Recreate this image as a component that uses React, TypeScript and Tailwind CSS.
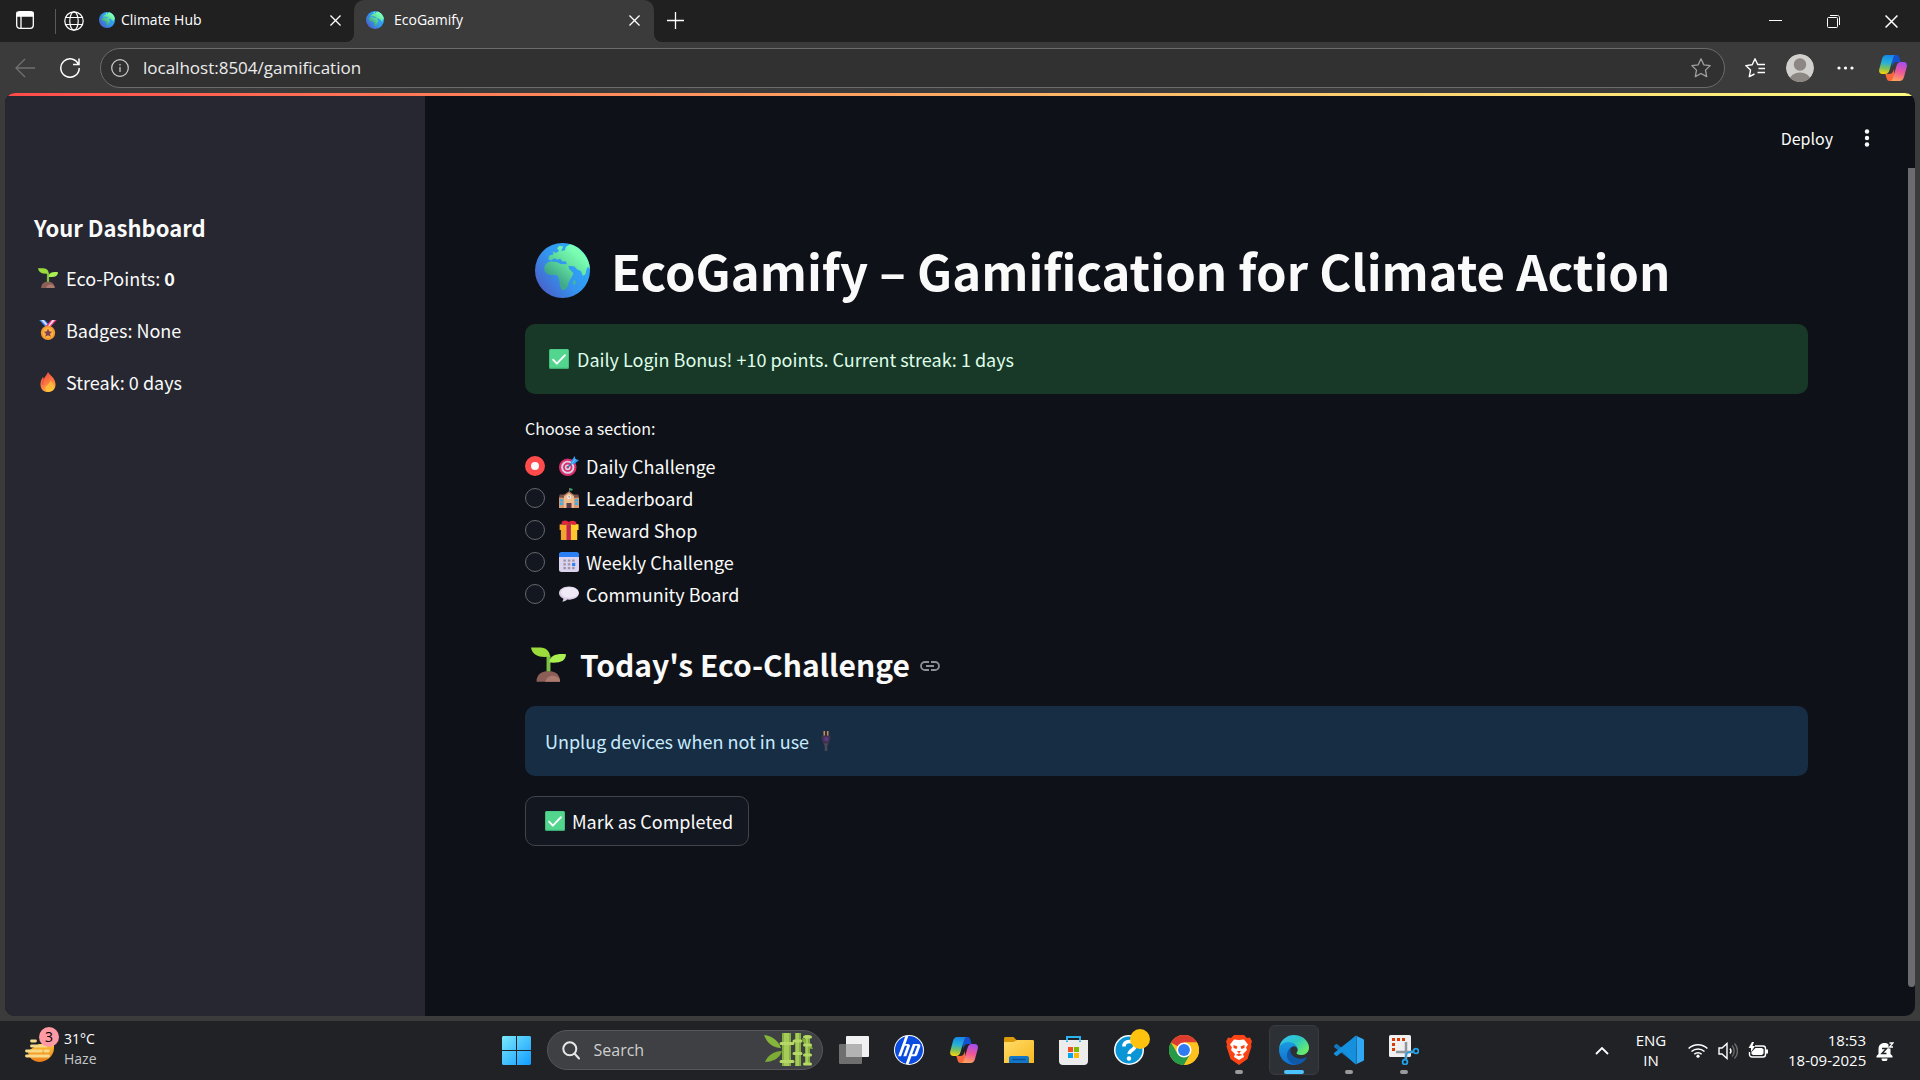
import { useState, type ReactNode } from 'react';
import { SiHp } from 'react-icons/si';

type IconProps = { className?: string };

function GlobeEmoji({ className }: IconProps) {
  return (
    <svg viewBox="0 0 32 32" className={className} aria-hidden="true">
      <defs>
        <linearGradient id="sea" x1="1" y1="0.2" x2="0.1" y2="0.9">
          <stop offset="0" stopColor="#2bb0fb" />
          <stop offset="0.55" stopColor="#3493ee" />
          <stop offset="1" stopColor="#4a5fc8" />
        </linearGradient>
        <linearGradient id="land" x1="0.9" y1="0.1" x2="0.3" y2="0.8">
          <stop offset="0.2" stopColor="#7bffb4" />
          <stop offset="0.6" stopColor="#5fdc9c" />
          <stop offset="1" stopColor="#3fa88a" />
        </linearGradient>
      </defs>
      <circle cx="16" cy="16" r="16" fill="url(#sea)" />
      <path
        d="M20.5 0.7C27 2.6 31.6 8.6 32 15.2L30.8 13.6L29.9 15.5L29.4 18.2L27.8 19.2L26.8 16.4L24.4 15.2L23 13.6L19.4 13.3L19.8 15L22.2 17.4L22 18.4C21 21 19.6 21.5 19.2 24.6C18.6 26.6 17.3 27.6 15.8 27.4C14.2 25.4 14.6 22.4 13.6 20.2C13.4 18.4 12.2 18.6 9.6 18.6C6.6 18.4 5 16.2 5.4 14.6C5.6 12.2 7.6 10.8 9.8 10.8L13 11.2L14.8 12.2L18.4 12.4L18.2 10.8L15.8 10.6L14.6 9L13.4 9.8L11.2 8.8L9.4 10.2L7.8 9.6L8.2 7.4L10.8 6.6L10.4 5L12.2 5.8L14 4.6L12.8 3L14.2 1.6L16.4 2L15.2 4.6L17.4 4.2L18 2.2Z"
        fill="url(#land)"
      />
      <path d="M22.6 21.4l1.2 1.2-.6 1.8-1.2-.8z" fill="#46b894" />
    </svg>
  );
}

function SeedlingEmoji({ className }: IconProps) {
  return (
    <svg viewBox="0 0 32 32" className={className} aria-hidden="true">
      <path d="M5 31.8C5 25 10 22 16 22s10.600 3 10.600 9.800z" fill="#8b5e57" />
      <path d="M13 31.800C14 27 20 24 25.500 28.500c.8 1.200 1.100 2.200 1.100 3.300z" fill="#ad7a70" />
      <path d="M14.200 22.200V8h3.600v14.200z" fill="#7ac043" />
      <path d="M0 .4h8.600C14 .6 17 4 17.400 8.600 9 10 1.500 8.500 0 .4z" fill="#9bdc3c" />
      <path d="M32 6.600c-.4 6-5 8.400-15.200 7.600C17.400 8 22 6 32 6.600z" fill="#aaf053" />
    </svg>
  );
}

function MedalEmoji({ className }: IconProps) {
  return (
    <svg viewBox="0 0 32 32" className={className} aria-hidden="true">
      <path d="M2 0h9l9 10-6 3z" fill="#3f8ef5" />
      <path d="M5 0h4l9 11-2 1z" fill="#e6e2ee" />
      <path d="M30 0h-9l-9 10 6 3z" fill="#f2377d" />
      <path d="M27 0h-4l-8 11 2 1z" fill="#f1dff0" />
      <circle cx="16" cy="20.500" r="11.500" fill="#f39a32" />
      <circle cx="16" cy="20.500" r="8.500" fill="#ffb13e" />
      <path d="M16 14l2 4.400 4.700.5-3.500 3.200 1 4.700-4.200-2.400-4.200 2.400 1-4.700-3.500-3.200 4.700-.5z" fill="#7b4156" />
    </svg>
  );
}

function FireEmoji({ className }: IconProps) {
  return (
    <svg viewBox="0 0 32 32" className={className} aria-hidden="true">
      <defs>
        <linearGradient id="flame" x1="0.3" y1="0" x2="0.7" y2="1">
          <stop offset="0" stopColor="#f04a3c" />
          <stop offset="0.6" stopColor="#ff8243" />
          <stop offset="1" stopColor="#ffc53a" />
        </linearGradient>
      </defs>
      <path d="M16 0c3 5 12 10 12 20 0 8-5.500 12-12 12S4 28 4 20c0-5 1.500-9 4-12l1.500 3C11 7 14 5 16 0z" fill="url(#flame)" />
      <path d="M20 13c4 5 6 8 5 12-1 4-4 6-7.500 6-3 0-6-1.500-6-5 0-5 7-7 8.500-13z" fill="#ffc53a" opacity="0.75" />
      <path d="M10 9c-2 4-3 8-2 12" stroke="#d93f3f" strokeWidth="1" fill="none" />
    </svg>
  );
}

function CheckEmoji({ className }: IconProps) {
  return (
    <svg viewBox="0 0 32 32" className={className} aria-hidden="true">
      <rect width="32" height="32" rx="2.500" fill="#3fae74" />
      <rect x="1" y="0.500" width="30" height="29.500" rx="2" fill="#52d68d" />
      <path d="M6.500 17l6 6.500L25.500 10" fill="none" stroke="#fff" strokeWidth="3" strokeLinecap="round" strokeLinejoin="round" />
    </svg>
  );
}

function DartEmoji({ className }: IconProps) {
  return (
    <svg viewBox="0 0 32 32" className={className} aria-hidden="true">
      <circle cx="14" cy="18" r="14" fill="#dc2d68" />
      <circle cx="14" cy="18" r="10.500" fill="#d9d3e8" />
      <circle cx="14" cy="18" r="7.500" fill="#dc2d68" />
      <circle cx="14" cy="18" r="4.600" fill="#d9d3e8" />
      <circle cx="14" cy="18" r="2" fill="#dc2d68" />
      <path d="M14 18L26 6" stroke="#2a6fa8" strokeWidth="2" />
      <path d="M18.500 9.500L25 0l1.500 5L32 6.500 23 14z" fill="#2f9df4" />
      <path d="M20 12L26.500 5" stroke="#83cbff" strokeWidth="1.500" />
    </svg>
  );
}

function SchoolEmoji({ className }: IconProps) {
  return (
    <svg viewBox="0 0 32 32" className={className} aria-hidden="true">
      <path d="M17 0l5 1.500-1 3-4-1z" fill="#39a36b" />
      <path d="M16.500 0h1v8h-1z" fill="#9b8e8e" />
      <path d="M0 14h32v18H0z" fill="#d99a74" />
      <path d="M1 10.500h30l1 5H0z" fill="#7a5048" />
      <path d="M8 12l8-6 8 6v20H8z" fill="#f0bd8d" />
      <path d="M7 12l9-7 9 7-1 1.500-8-6-8 6z" fill="#a9735e" />
      <circle cx="16" cy="14.500" r="3.200" fill="#efeaf6" />
      <path d="M16 12.500v2.200h1.500" stroke="#6b5a72" fill="none" />
      <path d="M12 24h8v8h-8z" fill="#5b3b4a" />
      <path d="M1.500 18h5v3.500h-5zM1.500 23h5v4h-5zM25.500 18h5v3.500h-5zM25.500 23h5v4h-5z" fill="#36b3ef" />
    </svg>
  );
}

function GiftEmoji({ className }: IconProps) {
  return (
    <svg viewBox="0 0 32 32" className={className} aria-hidden="true">
      <path d="M3 12h26v20H3z" fill="#f2a52e" />
      <path d="M16 12h13v20H16z" fill="#fbc62e" />
      <path d="M1 7h30v9H1z" fill="#f7a92b" />
      <path d="M19 7h12v9H19z" fill="#fdd32c" />
      <path d="M12 7h7v25h-7z" fill="#c2234f" />
      <path d="M4 6c0-5 6-7 11.500-3C21 0 28 1 28 6l-3 2-9-2-9 2z" fill="#e0263f" />
    </svg>
  );
}

function CalendarEmoji({ className }: IconProps) {
  const dots = [
    [7, 12], [14, 12], [21, 12],
    [7, 18], [14, 18],
    [7, 24], [14, 24], [21, 24],
  ];
  return (
    <svg viewBox="0 0 32 32" className={className} aria-hidden="true">
      <rect y="1" width="32" height="31" rx="4" fill="#dcd3ee" />
      <path d="M4 0h24c2.500 0 4 1.500 4 4v4H0V4c0-2.500 1.500-4 4-4z" fill="#2a80f2" />
      {dots.map(([x, y]) => (
        <rect key={`${x}-${y}`} x={x} y={y} width="4" height="3.500" fill="#9d94a8" />
      ))}
      <rect x="21" y="17.500" width="5" height="5" fill="#2a80f2" />
    </svg>
  );
}

function SpeechEmoji({ className }: IconProps) {
  return (
    <svg viewBox="0 0 32 32" className={className} aria-hidden="true">
      <path d="M16 4c9 0 16 4.500 16 10.500S25 25 16 25c-1 0-2-.1-3-.2C11 27 8 28 5 28c1.500-1.500 2-3 2-4.500C2.500 21.500 0 18.500 0 14.500 0 8.500 7 4 16 4z" fill="#dccfe6" />
      <ellipse cx="17" cy="13.500" rx="14" ry="8.500" fill="#efe9f5" />
    </svg>
  );
}

function PlugEmoji({ className }: IconProps) {
  return (
    <svg viewBox="0 0 32 32" className={className} aria-hidden="true">
      <path d="M12 0h2.500v8H12zM17.500 0H20v8h-2.500z" fill="#c98d5c" />
      <path d="M9 7h14v5l-3 9h-8L9 12z" fill="#43324f" />
      <path d="M13 10h7l-1 6h-5z" fill="#5b3a86" />
      <path d="M13 20h6v3h-1v9h-4v-9h-1z" fill="#4c4858" />
    </svg>
  );
}

function CopilotIcon({ className }: IconProps) {
  return (
    <svg viewBox="0 0 28 26" className={className} aria-hidden="true">
      <defs>
        <linearGradient id="copA" x1="0.4" y1="0" x2="0.3" y2="1">
          <stop offset="0" stopColor="#1687e8" />
          <stop offset="0.4" stopColor="#26b1d8" />
          <stop offset="0.7" stopColor="#7fc05a" />
          <stop offset="1" stopColor="#fbd40b" />
        </linearGradient>
        <linearGradient id="copB" x1="0.6" y1="0" x2="0.4" y2="1">
          <stop offset="0" stopColor="#a64df0" />
          <stop offset="0.5" stopColor="#ee5797" />
          <stop offset="1" stopColor="#ffa15c" />
        </linearGradient>
      </defs>
      <path d="M13 0h4.500c2 0 2.600 1.500 3.300 4l.9 3H18c-3 0-4 2-5 5z" fill="#1550cf" />
      <path d="M15 26h-4.500c-2 0-2.600-1.500-3.300-4l-.9-3H10c3 0 4-2 5-5z" fill="#f6673a" />
      <path d="M7.500 0H17c-2 0-2.600 2-3.200 4l-3.300 11c-.7 2.500-2 4-4.500 4H3.500C.5 19-.4 17 .3 14L3 4C3.800 1.500 5 0 7.500 0z" fill="url(#copA)" />
      <path d="M20.500 26H11c2 0 2.600-2 3.200-4l3.300-11c.7-2.500 2-4 4.500-4h2.500c3 0 3.900 2 3.200 5L25 22c-.8 2.500-2 4-4.500 4z" fill="url(#copB)" />
    </svg>
  );
}

function EdgeIcon({ className }: IconProps) {
  return (
    <svg viewBox="0 0 256 256" className={className} aria-hidden="true">
      <defs>
        <linearGradient id="edgeA" x1="0.2" y1="0" x2="1" y2="0.6">
          <stop offset="0" stopColor="#35c1f1" />
          <stop offset="0.5" stopColor="#2cc7c0" />
          <stop offset="1" stopColor="#66eb6e" />
        </linearGradient>
        <linearGradient id="edgeB" x1="0.5" y1="0" x2="0.5" y2="1">
          <stop offset="0" stopColor="#1b9de2" />
          <stop offset="1" stopColor="#0f6fce" />
        </linearGradient>
      </defs>
      <g transform="translate(-4.600 -4.900)">
        <path d="M235.680 195.460a93.730 93.730 0 0 1-10.540 4.710 101.870 101.870 0 0 1-35.900 6.460c-47.320 0-88.540-32.550-88.540-74.320A31.480 31.480 0 0 1 117.130 105c-42.800 1.800-53.800 46.400-53.800 72.530 0 73.880 68.090 81.370 82.760 81.370 7.910 0 19.840-2.300 27-4.560l1.310-.44a128.340 128.340 0 0 0 66.600-52.800 4 4 0 0 0-5.320-5.640Z" fill="#1059a8" />
        <path d="M110.340 246.340A79.200 79.200 0 0 1 87.600 225a80.720 80.720 0 0 1 29.530-120c3.120-1.470 8.450-4.130 15.540-4a32.350 32.350 0 0 1 25.690 13 31.880 31.880 0 0 1 6.360 18.660c0-.21 24.460-79.600-80-79.600-43.900 0-80 41.660-80 78.210a130.150 130.150 0 0 0 12.110 56 128 128 0 0 0 156.380 67.110 75.550 75.550 0 0 1-62.780-8Z" fill="url(#edgeB)" />
        <path d="M156.940 153.780c-.81 1.050-3.300 2.500-3.300 5.660 0 2.610 1.700 5.120 4.720 7.230 14.380 10 41.490 8.680 41.560 8.680a59.560 59.560 0 0 0 30.270-8.350 61.380 61.380 0 0 0 30.430-52.880c.26-22.410-8-37.310-11.340-43.910-21.190-41.450-66.930-65.290-116.670-65.290a128 128 0 0 0-128 126.200c.48-36.540 36.800-66.050 80-66.050 3.500 0 23.460.34 42 10.070 16.340 8.580 24.900 18.940 30.850 29.210 6.180 10.670 7.280 24.150 7.280 29.520s-2.740 13.330-7.800 19.910Z" fill="url(#edgeA)" />
      </g>
    </svg>
  );
}

function ChromeIcon({ className }: IconProps) {
  return (
    <svg viewBox="0 0 48 48" className={className} aria-hidden="true">
      <circle cx="24" cy="24" r="24" fill="#fcc31e" />
      <path d="M24 24L3.200 12A24 24 0 0 1 44.800 12H24z" fill="#dd3b30" />
      <path d="M3.200 12A24 24 0 0 0 24 48L34.400 30 24 24 13.600 30z" fill="#259a48" />
      <path d="M24 12H44.800A24 24 0 0 1 24 48L34.400 30z" fill="#fcc31e" />
      <circle cx="24" cy="24" r="12" fill="#fff" />
      <circle cx="24" cy="24" r="9.500" fill="#2f7cf0" />
    </svg>
  );
}

function WindowsIcon({ className }: IconProps) {
  return (
    <svg viewBox="0 0 29 29" className={className} aria-hidden="true">
      <defs>
        <linearGradient id="win" gradientUnits="userSpaceOnUse" x1="0" y1="0" x2="29" y2="29">
          <stop offset="0" stopColor="#7be9fb" />
          <stop offset="1" stopColor="#109bff" />
        </linearGradient>
      </defs>
      <path d="M1 0h13v14H0V1zM15 0h13l1 1v13H15zM0 15h14v14H1l-1-1zM15 15h14v13l-1 1H15z" fill="url(#win)" />
    </svg>
  );
}

function TaskViewIcon() {
  return (
    <svg viewBox="0 0 30 28" className="h-7 w-[30px]" aria-hidden="true">
      <rect x="7" y="0" width="23" height="21" rx="1" fill="#f1f1f1" />
      <rect x="0" y="8" width="23" height="20" rx="1" fill="#6f6f6f" />
      <path d="M7 8h16v13H7z" fill="#b3b3b3" />
    </svg>
  );
}

function HpIcon() {
  return (
    <span className="flex size-[30px] items-center justify-center rounded-full bg-white">
      <SiHp className="size-7 text-[#0a4be0]" />
    </span>
  );
}

function FolderIcon() {
  return (
    <svg viewBox="0 0 30 27" className="h-[27px] w-[30px]" aria-hidden="true">
      <defs>
        <linearGradient id="folder" x1="0" y1="0" x2="1" y2="1">
          <stop offset="0" stopColor="#ffdc6b" />
          <stop offset="1" stopColor="#f9b81c" />
        </linearGradient>
      </defs>
      <path d="M0 1.500C0 .5.500 0 1.500 0h8L13 3.500V8H0z" fill="#dc9a09" />
      <path d="M0 5h9.500L13 3h15.500c1 0 1.500.5 1.500 1.500V26H0z" fill="url(#folder)" />
      <path d="M5 26v-5c0-1.200.8-2 2-2h16c1.200 0 2 .8 2 2v5z" fill="#1277c9" />
      <path d="M9 22.500h12" stroke="#0c4f93" strokeWidth="1.500" strokeLinecap="round" />
    </svg>
  );
}

function StoreIcon() {
  return (
    <svg viewBox="0 0 29 29" className="size-[29px]" aria-hidden="true">
      <path d="M8 7V1h13v6" fill="none" stroke="#2bb3f0" strokeWidth="2" />
      <path d="M0 4h29v21c0 2.500-1.500 4-4 4H4c-2.500 0-4-1.500-4-4z" fill="#ececec" />
      <path d="M8 4V1.500M21 4V1.500M8 4.500V6M21 4.500V6" stroke="#2bb3f0" strokeWidth="2" />
      <path d="M9 11h5v5H9z" fill="#f25022" />
      <path d="M15 11h5v5h-5z" fill="#7fba00" />
      <path d="M9 17h5v5H9z" fill="#00a4ef" />
      <path d="M15 17h5v5h-5z" fill="#ffb900" />
    </svg>
  );
}

function HelpIcon() {
  return (
    <span className="relative">
      <svg viewBox="0 0 30 30" className="size-[30px]" aria-hidden="true">
        <circle cx="15" cy="15" r="15" fill="#fff" />
        <circle cx="15" cy="15" r="13.500" fill="#0a96d6" />
        <path d="M10 11.500C10 8 12.500 6.500 15.500 6.500s5.500 1.500 5.500 4.500c0 4-5.800 4-5.800 8" fill="none" stroke="#fff" strokeWidth="3.600" />
        <circle cx="15" cy="23.500" r="2.200" fill="#fff" />
      </svg>
      <span className="absolute -top-1.5 left-4 size-5 rounded-full bg-[#ffc20e]" />
    </span>
  );
}

function BraveIcon() {
  return (
    <svg viewBox="0 0 26 30" className="h-[30px] w-[26px]" aria-hidden="true">
      <path d="M8 0h10l3 3 3-.5 2 4-1 3 .5 2-4 12.500L13 30 4.500 24 .5 11.500l.5-2-1-3 2-4L5 3z" fill="#fb4416" />
      <path d="M13 5l5-.5 4 5-2 3 1 2.500-4 4 1 3-5 3-5-3 1-3-4-4 1-2.500-2-3 4-5z" fill="#fff" />
      <path d="M7.500 10l4 1.500-1 2.500-3-1zM18.500 10l-4 1.500 1 2.500 3-1zM11 16h4l-2 2.500zM9.500 20l3.500-1.500 3.500 1.500-3.500 1z" fill="#fb4416" />
    </svg>
  );
}

function CodeIcon() {
  return (
    <svg viewBox="0 0 100 100" className="size-[30px]" aria-hidden="true">
      <path d="M72 2L28 44 11 31c-2-1.500-4-1.200-6 .3l-4 3.800c-1.500 1.700-1.500 4 0 5.500L74 98V72z" fill="#1177bd" />
      <path d="M72 98L28 56 11 69c-2 1.500-4 1.200-6-.3l-4-3.800c-1.500-1.700-1.500-4 0-5.500L74 2v26z" fill="#1490df" />
      <path d="M70 1l27 12c2 1 3 2.500 3 4.500v65c0 2-1 3.500-3 4.500L70 99c3-1 5-3 5-6V7c0-3-2-5-5-6z" fill="#2fa9f5" />
    </svg>
  );
}

function SnipIcon() {
  return (
    <svg viewBox="0 0 30 30" className="size-[30px]" aria-hidden="true">
      <rect width="22" height="22" rx="1.500" fill="#f0f0f0" />
      <path d="M4.500 16V4.500H16" fill="none" stroke="#d83b01" strokeWidth="3" strokeDasharray="3 2" />
      <path d="M17 7v17M7 17h17" stroke="#8d979e" strokeWidth="2.500" />
      <circle cx="27" cy="16" r="2.400" fill="none" stroke="#1fa2e8" strokeWidth="1.800" />
      <circle cx="16" cy="27" r="2.400" fill="none" stroke="#1fa2e8" strokeWidth="1.800" />
      <path d="M18 18l6-2M18 18l-2 6" stroke="#1fa2e8" strokeWidth="1.500" />
    </svg>
  );
}

function BambooIcon() {
  return (
    <svg viewBox="0 0 50 34" className="h-[34px] w-[50px]" aria-hidden="true">
      <path d="M0 2c8 1 14 5 17 13C9 15 3 10 0 2z" fill="#86b53c" />
      <path d="M1 29C4 22 10 18 18 18c-2 7-9 11-17 11z" fill="#7dab36" />
      <path d="M38 5c6 2 9 6 11 11-6 0-10-5-11-11z" fill="#86b53c" />
      <path d="M18 0h9v33h-9zM31 0h6v33h-6zM41 2h5v30h-5z" fill="#86b040" />
      <path d="M20 0h5v33h-5zM32 0h3v33h-3zM42 2h2v30h-2z" fill="#a5cb58" />
      <path d="M17 10.500h12M17 28.500h12M30 8h7M30 20.500h7M40.500 4h6M40.500 12h6M40.500 22h6M40.500 31h6" stroke="#b5d867" strokeWidth="3" strokeLinecap="round" />
    </svg>
  );
}

function CloseIcon({ className }: IconProps) {
  return (
    <svg viewBox="0 0 12 12" className={className} fill="none" stroke="currentColor" strokeWidth="1.400" aria-hidden="true">
      <path d="M.5.5l11 11M11.500.5l-11 11" />
    </svg>
  );
}

function BrowserTab({ title, active = false }: { title: string; active?: boolean }) {
  if (active) {
    return (
      <div className="relative flex h-[42px] w-[300px] items-center rounded-t-[10px] bg-[#3b3b3b] pr-3.5 pb-0.5 pl-3">
        <span className="absolute bottom-0 -left-2 size-2 rounded-br-lg shadow-[3px_3px_0_2px_#3b3b3b] [clip-path:inset(0)]" />
        <span className="absolute -right-2 bottom-0 size-2 rounded-bl-lg shadow-[-3px_3px_0_2px_#3b3b3b] [clip-path:inset(0)]" />
        <GlobeEmoji className="size-[18px]" />
        <span className="ml-2.5 flex-1 text-sm text-white">{title}</span>
        <button type="button" aria-label={`Close ${title}`} className="text-white">
          <CloseIcon className="size-[11px]" />
        </button>
      </div>
    );
  }
  return (
    <div className="flex h-[42px] w-[255px] items-center pr-[13px] pb-0.5">
      <GlobeEmoji className="size-4" />
      <span className="ml-1.5 flex-1 text-sm text-white">{title}</span>
      <button type="button" aria-label={`Close ${title}`} className="text-white">
        <CloseIcon className="size-[11px]" />
      </button>
    </div>
  );
}

function TitleBar() {
  return (
    <div className="flex h-[42px] items-center bg-[#202020] text-white">
      <button type="button" aria-label="Tab actions" className="ml-4 pb-0.5">
        <svg viewBox="0 0 18 18" className="size-[18px]" fill="none" stroke="currentColor" strokeWidth="1.300" aria-hidden="true">
          <rect x="0.700" y="0.700" width="16.600" height="16.600" rx="3" />
          <path d="M1 1.500h16V5H1z" fill="currentColor" />
          <path d="M5 5v12" />
        </svg>
      </button>
      <span className="ml-[21px] h-[25px] w-px bg-[#5a5a5a]" />
      <svg viewBox="0 0 20 20" className="mr-[15px] ml-2 size-5" fill="none" stroke="currentColor" strokeWidth="1.200" aria-hidden="true">
        <circle cx="10" cy="10" r="9.200" />
        <ellipse cx="10" cy="10" rx="4.200" ry="9.200" />
        <path d="M1.500 6.500h17M1.500 13.500h17" />
      </svg>
      <BrowserTab title="Climate Hub" />
      <BrowserTab title="EcoGamify" active />
      <button type="button" aria-label="New tab" className="ml-[13px] pb-0.5">
        <svg viewBox="0 0 17 17" className="size-[17px]" stroke="currentColor" strokeWidth="1.300" aria-hidden="true">
          <path d="M8.500 0v17M0 8.500h17" />
        </svg>
      </button>
      <div className="ml-auto flex items-center gap-[45px] pr-[22px]">
        <button type="button" aria-label="Minimize">
          <svg viewBox="0 0 13 13" className="size-[13px]" stroke="currentColor" aria-hidden="true">
            <path d="M0 5.500h13" />
          </svg>
        </button>
        <button type="button" aria-label="Restore">
          <svg viewBox="0 0 13 13" className="size-[13px]" fill="none" stroke="currentColor" aria-hidden="true">
            <rect x="0.500" y="2.500" width="10" height="10" rx="1" />
            <path d="M3 .5h7.500c1.200 0 2 .8 2 2V10" />
          </svg>
        </button>
        <button type="button" aria-label="Close">
          <CloseIcon className="size-[13px]" />
        </button>
      </div>
    </div>
  );
}

const STAR = 'M10 .8l2.800 6 6.400.8-4.700 4.500 1.200 6.500L10 15.500l-5.700 3.100 1.200-6.500L.8 7.600l6.400-.8z';

function AddressBar() {
  return (
    <div className="flex h-[51px] items-center bg-[#3b3b3b] pr-[13px] pl-[15px] text-white">
      <button type="button" aria-label="Back" className="text-[#707070]">
        <svg viewBox="0 0 20 20" className="size-5" fill="none" stroke="currentColor" strokeWidth="1.300" aria-hidden="true">
          <path d="M20 10H1M10 1L1 10l9 9" />
        </svg>
      </button>
      <button type="button" aria-label="Refresh" className="ml-[25px]">
        <svg viewBox="0 0 20 20" className="size-5" fill="none" stroke="currentColor" strokeWidth="1.500" aria-hidden="true">
          <path d="M18.500 6.500A9.200 9.200 0 1 0 19.200 10M19 .5V6.500H13" />
        </svg>
      </button>
      <div className="mr-5 ml-5 flex h-10 flex-1 items-center rounded-full border border-[#6c6c6c] bg-[#313131] pr-[13px] pl-2.5">
        <svg viewBox="0 0 18 18" className="size-[18px] text-[#cfcfcf]" fill="none" stroke="currentColor" strokeWidth="1.200" aria-hidden="true">
          <circle cx="9" cy="9" r="8.300" />
          <path d="M9 8v5M9 5v1.500" />
        </svg>
        <input
          aria-label="Address"
          defaultValue="localhost:8504/gamification"
          className="ml-3.5 flex-1 bg-transparent text-[17px] text-[#ececec] outline-none"
        />
        <button type="button" aria-label="Add to favorites" className="text-[#a0a0a0]">
          <svg viewBox="0 0 20 20" className="size-5" fill="none" stroke="currentColor" strokeWidth="1.300" strokeLinejoin="round" aria-hidden="true">
            <path d={STAR} />
          </svg>
        </button>
      </div>
      <button type="button" aria-label="Favorites">
        <svg viewBox="0 0 20 20" className="size-5" fill="none" stroke="currentColor" strokeWidth="1.400" strokeLinejoin="round" aria-hidden="true">
          <path d="M12.800 6.800L10 .8 7.200 6.800.8 7.600l4.700 4.500-1.200 6.500L9.500 16M12.500 6.500H20M13.500 10.500H20M12.500 14.500H20" />
        </svg>
      </button>
      <button type="button" aria-label="Profile" className="ml-[21px]">
        <svg viewBox="0 0 28 28" className="size-7 rounded-full" aria-hidden="true">
          <circle cx="14" cy="14" r="14" fill="#d2d0cd" />
          <circle cx="14" cy="10.500" r="6.200" fill="#8c8783" />
          <ellipse cx="14" cy="25" rx="10" ry="6.500" fill="#8c8783" />
        </svg>
      </button>
      <button type="button" aria-label="Settings and more" className="ml-[23px]">
        <svg viewBox="0 0 17 4" className="h-1 w-[17px]" fill="currentColor" aria-hidden="true">
          <circle cx="2" cy="2" r="1.600" />
          <circle cx="8.500" cy="2" r="1.600" />
          <circle cx="15" cy="2" r="1.600" />
        </svg>
      </button>
      <button type="button" aria-label="Copilot" className="ml-[25px]">
        <CopilotIcon className="h-[26px] w-7" />
      </button>
    </div>
  );
}

function Sidebar() {
  return (
    <aside className="w-[420px] shrink-0 bg-[#262730] px-7 pt-[118px] text-lg leading-8">
      <h3 className="px-px text-[22px] font-semibold">Your Dashboard</h3>
      <ul className="mt-[19px] flex flex-col gap-5">
        <li className="flex items-center">
          <SeedlingEmoji className="mr-2 ml-[5px] size-5" />
          <span>Eco-Points: <strong>0</strong></span>
        </li>
        <li className="flex items-center">
          <MedalEmoji className="mr-2 ml-[5px] size-5" />
          Badges: None
        </li>
        <li className="flex items-center">
          <FireEmoji className="mr-2 ml-[5px] size-5" />
          Streak: 0 days
        </li>
      </ul>
    </aside>
  );
}

const sections = [
  { name: 'Daily Challenge', Icon: DartEmoji },
  { name: 'Leaderboard', Icon: SchoolEmoji },
  { name: 'Reward Shop', Icon: GiftEmoji },
  { name: 'Weekly Challenge', Icon: CalendarEmoji },
  { name: 'Community Board', Icon: SpeechEmoji },
];

function SectionPicker() {
  const [section, setSection] = useState('Daily Challenge');

  return (
    <fieldset>
      <legend className="h-9 text-base leading-7">Choose a section:</legend>
      {sections.map(({ name, Icon }) => (
        <label key={name} className="flex h-8 w-fit items-center">
          <input
            type="radio"
            name="section"
            checked={section === name}
            onChange={() => setSection(name)}
            className="size-5 appearance-none rounded-full border border-[#64676e] bg-[#131720] checked:border-[6px] checked:border-[#ff4b4b] checked:bg-[#fafafa]"
          />
          <Icon className="mr-[7px] ml-3.5 size-5" />
          {name}
        </label>
      ))}
    </fieldset>
  );
}

function Content() {
  return (
    <main className="min-w-0 flex-1 text-lg leading-8">
      <header className="flex h-[90px] items-center justify-end gap-6 pr-[31px] text-base">
        <button type="button">Deploy</button>
        <button type="button" aria-label="Main menu">
          <svg viewBox="0 0 20 20" className="size-5" fill="currentColor" aria-hidden="true">
            <circle cx="10" cy="3.500" r="2.200" />
            <circle cx="10" cy="10" r="2.200" />
            <circle cx="10" cy="16.500" r="2.200" />
          </svg>
        </button>
      </header>
      <div className="flex flex-col gap-5 px-[100px] pt-[55px]">
        <h1 className="flex h-[66px] items-center pb-0.5 text-[49px] font-bold whitespace-nowrap">
          <GlobeEmoji className="mr-[21px] ml-2.5 size-[55px]" />
          EcoGamify – Gamification for Climate Action
        </h1>
        <div role="status" className="flex h-[70px] items-center rounded-[10px] bg-[#183928] px-6 text-[#dffde9]">
          <CheckEmoji className="mr-2 size-5" />
          Daily Login Bonus! +10 points. Current streak: 1 days
        </div>
        <SectionPicker />
        <h2 className="flex h-[56px] items-center pt-3 text-[30px] font-semibold">
          <SeedlingEmoji className="mr-3.5 ml-1.5 size-[35px]" />
          Today's Eco-Challenge
          <a href="#today" aria-label="Link to heading" className="ml-2.5 text-[#8d9096]">
            <svg viewBox="0 0 20 10" className="mt-1 h-2.5 w-5" fill="none" stroke="currentColor" strokeWidth="1.800" aria-hidden="true">
              <path d="M9 1H5a4 4 0 0 0 0 8h4M11 1h4a4 4 0 0 1 0 8h-4M6 5h8" />
            </svg>
          </a>
        </h2>
        <div className="flex h-[70px] items-center rounded-[10px] bg-[#172d43] px-5 text-[#c7ebff]">
          Unplug devices when not in use
          <PlugEmoji className="ml-[7px] size-5" />
        </div>
        <button type="button" className="flex h-[50px] w-fit items-center rounded-[10px] border border-[#41444c] bg-[#131720] pr-[15px] pl-[19px]">
          <CheckEmoji className="mr-[7px] size-5" />
          Mark as Completed
        </button>
      </div>
    </main>
  );
}

function TaskbarApp({ label, state, children }: { label: string; state?: 'running' | 'focused'; children: ReactNode }) {
  return (
    <button
      type="button"
      aria-label={label}
      className={`relative flex size-[50px] items-center justify-center rounded-md ${state === 'focused' ? 'border border-[#383b3f] bg-[#2d3034]' : ''}`}
    >
      {children}
      {state === 'running' && <span className="absolute bottom-px h-1 w-2 rounded-full bg-[#9a9a9a]" />}
      {state === 'focused' && <span className="absolute bottom-0 h-1 w-5 rounded-full bg-[#4cc2ff]" />}
    </button>
  );
}

function Tray() {
  return (
    <div className="flex items-center justify-end pr-[26px] text-[15px] leading-5 text-white">
      <button type="button" aria-label="Show hidden icons">
        <svg viewBox="0 0 14 8" className="h-2 w-3.5" fill="none" stroke="currentColor" strokeWidth="1.800" aria-hidden="true">
          <path d="M1 7l6-6 6 6" />
        </svg>
      </button>
      <span className="ml-[26px] w-8 pb-0.5 text-center">ENG IN</span>
      <button type="button" aria-label="Network, volume and battery" className="ml-[21px] flex items-center gap-2.5">
        <svg viewBox="0 0 20 15" className="h-[15px] w-5" fill="none" stroke="currentColor" strokeWidth="1.500" aria-hidden="true">
          <path d="M.6 5.500a13.500 13.500 0 0 1 18.800 0M3.500 8.500a9.500 9.500 0 0 1 13 0M6.300 11.300a5.500 5.500 0 0 1 7.400 0" />
          <circle cx="10" cy="13.200" r="1.600" fill="currentColor" stroke="none" />
        </svg>
        <svg viewBox="0 0 20 18" className="h-[18px] w-5" fill="none" stroke="currentColor" strokeWidth="1.400" aria-hidden="true">
          <path d="M1 6h3l5-4.500v15L4 12H1z" />
          <path d="M12 6.500a4 4 0 0 1 0 5" />
          <path d="M14 3.500a8 8 0 0 1 0 11M16.500 1.500a11 11 0 0 1 0 15" stroke="#6a6a6a" />
        </svg>
        <svg viewBox="0 0 20 17" className="h-[17px] w-5" fill="none" stroke="currentColor" strokeWidth="1.400" aria-hidden="true">
          <path d="M7 4h8c1.500 0 2.500 1 2.500 2.500v6c0 1.500-1 2.500-2.500 2.500H4c-1.500 0-2.500-1-2.500-2.500V10" />
          <path d="M7.500 6H14l1.500 1.500v4L14 13H5l-1.500-1v-2z" fill="currentColor" stroke="none" />
          <path d="M4 0L.5 6H3v4l4-6H4.500L6 0zM18 7.500h2v4h-2z" fill="currentColor" stroke="none" />
        </svg>
      </button>
      <time className="ml-5 w-[78px] pb-0.5 text-right whitespace-nowrap">
        18:53
        <br />
        18-09-2025
      </time>
      <button type="button" aria-label="Notifications" className="ml-2.5">
        <svg viewBox="0 0 18 20" className="h-5 w-[18px]" aria-hidden="true">
          <path d="M8.500 2C4.500 2 2.500 4.500 2.500 8v5L.5 15v1.500h16V15l-2-2V8c0-3.500-2-6-6-6z" fill="#fff" />
          <path d="M5.500 17.500h6a3 3 0 0 1-6 0z" fill="#fff" />
          <path d="M12.500 0H18v7.500h-5.500z" fill="#202226" />
          <path d="M13.500 2h3.500l-3.500 4H17" fill="none" stroke="#fff" strokeWidth="1.300" />
          <path d="M6 7.500h4.500L6 12.500h4.500" fill="none" stroke="#202226" strokeWidth="1.500" />
        </svg>
      </button>
    </div>
  );
}

function Taskbar() {
  return (
    <footer className="grid h-[59px] grid-cols-[1fr_auto_1fr] items-center bg-[#202226] text-white">
      <button type="button" className="flex w-fit items-center pb-1 pl-[25px] text-left text-sm leading-5">
        <span className="relative mt-1">
          <svg viewBox="0 0 30 24" className="h-6 w-[30px]" aria-hidden="true">
            <defs>
              <linearGradient id="sun" x1="0.500" y1="0" x2="0.500" y2="1">
                <stop offset="0" stopColor="#fbc233" />
                <stop offset="1" stopColor="#ed7d1b" />
              </linearGradient>
            </defs>
            <path d="M3 12c0 7 6 11 11.500 11S29 18 29 9V5H14z" fill="url(#sun)" />
            <path d="M6.500 2h4M6.500 7h15M1.500 12h15M20 12h3.500M1.500 17h22" stroke="#f7d98a" strokeWidth="2.800" strokeLinecap="round" />
          </svg>
          <span className="absolute -top-3 left-3.5 flex size-5 items-center justify-center rounded-full bg-[#ff99a4] text-sm text-black">3</span>
        </span>
        <span className="ml-[9px]">
          31°C
          <br />
          <span className="text-[#c4c5c7]">Haze</span>
        </span>
      </button>
      <div className="flex items-center gap-[5px] pb-px">
        <TaskbarApp label="Start">
          <WindowsIcon className="size-[29px]" />
        </TaskbarApp>
        <label className="mr-px flex h-10 w-[276px] items-center rounded-full border border-[#55575a] bg-[#3e4043] pr-2 pl-3.5">
          <svg viewBox="0 0 18 19" className="h-[19px] w-[18px]" fill="none" stroke="#e8e8e8" strokeWidth="2" strokeLinecap="round" aria-hidden="true">
            <circle cx="7.800" cy="7.800" r="6.500" />
            <path d="M12.500 12.500l4.500 5" />
          </svg>
          <input
            type="search"
            placeholder="Search"
            aria-label="Search"
            className="ml-3.5 min-w-0 flex-1 bg-transparent text-base outline-none placeholder:text-[#cfcfcf]"
          />
          <BambooIcon />
        </label>
        <TaskbarApp label="Task view"><TaskViewIcon /></TaskbarApp>
        <TaskbarApp label="HP"><HpIcon /></TaskbarApp>
        <TaskbarApp label="Copilot"><CopilotIcon className="h-[26px] w-7" /></TaskbarApp>
        <TaskbarApp label="File Explorer"><FolderIcon /></TaskbarApp>
        <TaskbarApp label="Microsoft Store"><StoreIcon /></TaskbarApp>
        <TaskbarApp label="Get help"><HelpIcon /></TaskbarApp>
        <TaskbarApp label="Chrome"><ChromeIcon className="size-[30px]" /></TaskbarApp>
        <TaskbarApp label="Brave" state="running"><BraveIcon /></TaskbarApp>
        <TaskbarApp label="Edge" state="focused"><EdgeIcon className="size-[30px]" /></TaskbarApp>
        <TaskbarApp label="Visual Studio Code" state="running"><CodeIcon /></TaskbarApp>
        <TaskbarApp label="Snipping Tool" state="running"><SnipIcon /></TaskbarApp>
      </div>
      <Tray />
    </footer>
  );
}

export default function App() {
  return (
    <div className="flex min-h-screen flex-col bg-[#3b3b3b] font-['Open_Sans','Noto_Sans',sans-serif]">
      <TitleBar />
      <AddressBar />
      <div className="relative mx-[5px] mb-[5px] flex flex-1 overflow-hidden rounded-[10px] bg-[#0e1117] font-['Noto_Sans_CJK_SC',sans-serif] text-[#fafafa]">
        <div className="absolute inset-x-0 top-0 h-[3px] bg-linear-to-r from-[#ff4b4b] to-[#fffd80]" />
        <Sidebar />
        <Content />
        <div className="mt-[75px] mb-[29px] w-[7px] rounded-b bg-[#6b6b70]" />
      </div>
      <Taskbar />
    </div>
  );
}
